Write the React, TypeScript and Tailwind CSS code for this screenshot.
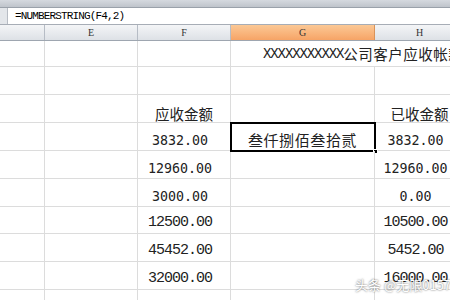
import React from "react";

const W = ["w-[45px]", "w-[93px]", "w-[93px]", "w-[144px]", "w-[90px]"];
const CJK = "font-['Noto_Sans_CJK_SC',sans-serif]";
const SANSNUM = "font-['DejaVu_Sans_Mono',monospace] text-[13.3px] tracking-[0px]";
const SERIFNUM = "font-['Liberation_Mono',monospace] text-[15px] tracking-[-1px]";

type RowSpec = { h: string; f?: string; g?: React.ReactNode; hcol?: string; serif?: boolean };

const rows: RowSpec[] = [
  { h: "h-[28px]" },
  { h: "h-[28px]", f: "应收金额", hcol: "已收金额" },
  { h: "h-[28px]", f: "3832.00", hcol: "3832.00" },
  { h: "h-[28px]", f: "12960.00", hcol: "12960.00" },
  { h: "h-[28px]", f: "3000.00", hcol: "0.00" },
  { h: "h-[27px]", f: "12500.00", hcol: "10500.00", serif: true },
  { h: "h-[28px]", f: "45452.00", hcol: "5452.00", serif: true },
  { h: "h-[28px]", f: "32000.00", hcol: "16000.00", serif: true },
  { h: "h-[28px]" },
];

function Val({ text, serif }: { text?: string; serif?: boolean }) {
  if (!text) return null;
  const isCjk = /[\u4e00-\u9fff]/.test(text);
  if (isCjk)
    return (
      <span className={`${CJK} text-[14.5px] leading-none text-[#222] pb-[1px]`}>{text}</span>
    );
  return (
    <span className={`${serif ? SERIFNUM : SANSNUM} leading-none text-[#222] pb-[3px] pr-2`}>
      {text}
    </span>
  );
}

export default function App() {
  return (
    <div className="relative w-[450px] h-[300px] overflow-hidden bg-white">
      {/* top toolbar strip */}
      <div className="h-[8px] bg-gradient-to-b from-[#d5d9df] to-[#bfc4cb] border-b border-[#9aa1aa]" />
      {/* formula bar */}
      <div className="flex h-[17px] border-b border-[#a7adb6] bg-white">
        <div className="w-[8px] bg-[#e3e6ea] border-r border-[#b7bcc4]" />
        <div className="flex items-center pl-[7px] font-['Liberation_Mono',monospace] text-[11px] tracking-[-0.85px] text-black">
          =NUMBERSTRING(F4,2)
        </div>
      </div>
      {/* column headers */}
      <div className="flex h-[16px] border-b border-[#9ea6b0]">
        {["", "E", "F", "G", "H"].map((c, i) => (
          <div
            key={i}
            className={`${W[i]} shrink-0 flex items-center justify-center border-r font-['Liberation_Serif',serif] text-[10px] text-[#333] ${
              c === "G"
                ? "bg-gradient-to-b from-[#fbc895] to-[#f6a466] border-[#d9935a]"
                : "bg-gradient-to-b from-[#f4f5f7] to-[#dde1e6] border-[#b6bcc5]"
            }`}
          >
            {c}
          </div>
        ))}
      </div>
      {/* row 1 with merged title */}
      <div className="flex h-[26px]">
        <div className={`${W[0]} shrink-0 border-r border-b border-[#dcdcdc]`} />
        <div className={`${W[1]} shrink-0 border-r border-b border-[#dcdcdc]`} />
        <div className={`${W[2]} shrink-0 border-r border-b border-[#dcdcdc]`} />
        <div className="w-[234px] shrink-0 border-b border-[#dcdcdc] flex items-end pl-[32px] pb-[5px] whitespace-nowrap text-[#222]">
          <span className="font-['Liberation_Mono',monospace] text-[14px] tracking-[-1.1px] leading-none">
            XXXXXXXXXXX
          </span>
          <span className={`${CJK} text-[14.5px] tracking-[0.5px] leading-none`}>公司客户应收帐款明细表</span>
        </div>
      </div>
      {rows.map((r, ri) => (
        <div key={ri} className={`flex ${r.h}`}>
          <div className={`${W[0]} shrink-0 border-r border-b border-[#dcdcdc]`} />
          <div className={`${W[1]} shrink-0 border-r border-b border-[#dcdcdc]`} />
          <div className={`${W[2]} shrink-0 border-r border-b border-[#dcdcdc] flex items-end justify-center`}>
            <Val text={r.f} serif={r.serif} />
          </div>
          <div className={`${W[3]} shrink-0 border-r border-b border-[#dcdcdc] relative flex items-end justify-center`}>
            {ri === 2 && (
              <>
                <span className={`${CJK} text-[15px] tracking-[0.6px] leading-none text-[#222] pb-[3px]`}>
                  叁仟捌佰叁拾贰
                </span>
                <div className="absolute top-[-1px] left-[-1px] right-[-2px] bottom-[-2px] border-2 border-black" />
                <div className="absolute right-[-4px] bottom-[-4px] w-[5px] h-[5px] bg-black border border-white" />
              </>
            )}
          </div>
          <div className={`${W[4]} shrink-0 border-r border-b border-[#dcdcdc] flex items-end justify-center`}>
            <Val text={r.hcol} serif={r.serif} />
          </div>
        </div>
      ))}
      {/* watermark */}
      <div
        className={`absolute left-[355px] top-[278px] ${CJK} text-[13px] leading-none text-white [text-shadow:0_0_2px_rgba(0,0,0,0.7)] whitespace-nowrap`}
      >
        头条 @无限0157
      </div>
    </div>
  );
}
